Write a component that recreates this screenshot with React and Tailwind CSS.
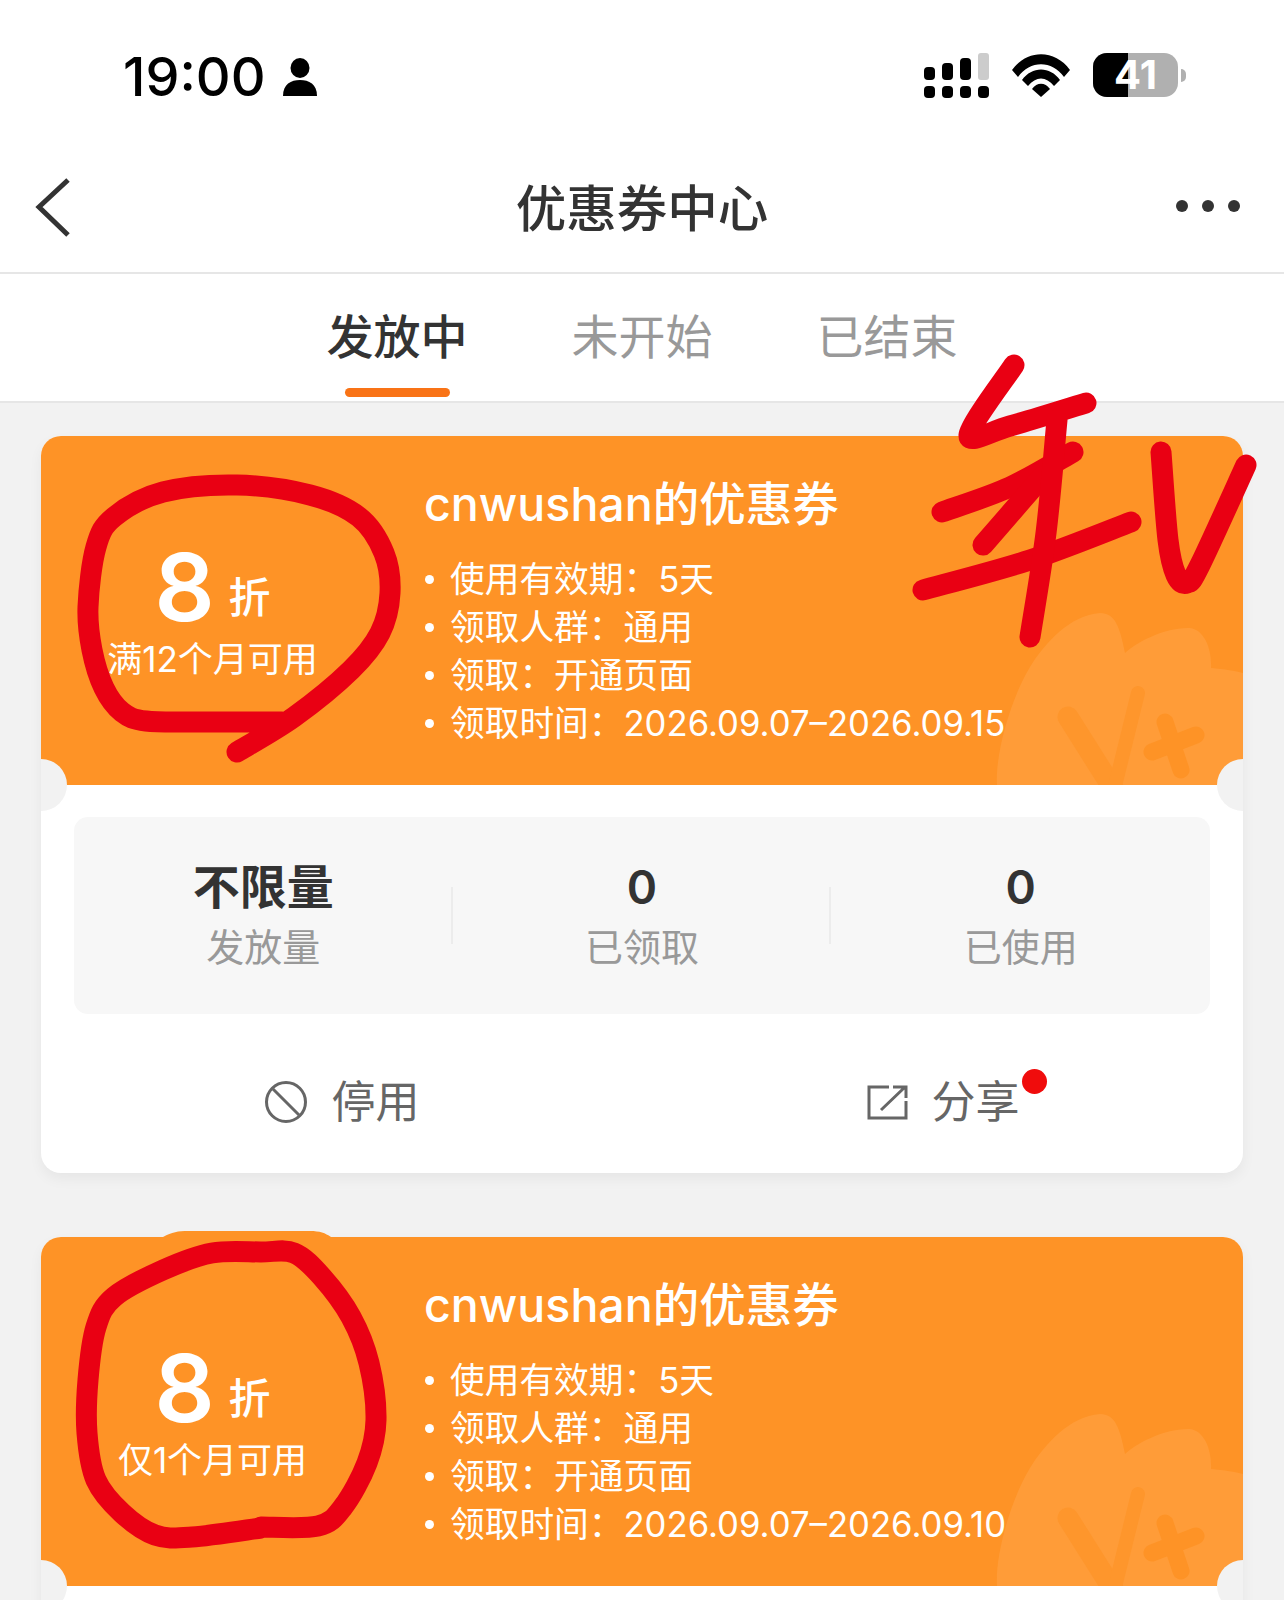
const smooth = (p) => {
  let d = `M${p[0][0]} ${p[0][1]}`;
  for (let i = 0; i < p.length - 1; i++) {
    const a = p[i - 1] || p[i], b = p[i], c = p[i + 1], e = p[i + 2] || c;
    d += `C${b[0] + (c[0] - a[0]) / 6} ${b[1] + (c[1] - a[1]) / 6} ${c[0] - (e[0] - b[0]) / 6} ${c[1] - (e[1] - b[1]) / 6} ${c[0]} ${c[1]}`;
  }
  return d;
};

const ink = [
  [[282,722],[200,722],[146,721],[122,712],[104,688],[92,650],[88,607],[96,547],[114,517],[163,492],[237,485],[310,495],[359,517],[384,553],[390,593],[380,633],[351,670],[294,717],[237,752]],
  [[261,1527],[318,1526],[343,1507],[367,1463],[376,1420],[369,1363],[351,1317],[322,1277],[294,1253],[261,1252],[212,1253],[163,1270],[114,1297],[96,1327],[88,1380],[87,1433],[96,1480],[122,1513],[155,1535],[192,1537],[261,1528]],
  [[1014,365],[969,435],[1010,426],[1086,403]],
  [[1073,452],[1010,487],[942,512]],
  [[1042,477],[983,545]],
  [[1131,522],[1030,560],[923,590]],
  [[1057,420],[1046,533],[1030,637]],
  [[1161,452],[1168,540],[1176,575],[1187,583],[1200,565],[1246,465]],
];

function Blob() {
  return (
    <svg className="absolute right-0 bottom-0" width="253" height="180" viewBox="0 0 253 180">
      <path fill="#ff9c38" d="M7 180C5 150 20 95 40 62C55 38 80 10 110 8C125 8 130 22 135 48C145 38 175 22 200 23C215 25 222 45 221 63C235 64 245 66 253 68V180Z" />
      <path fill="none" stroke="#fe962c" strokeWidth="21" strokeLinecap="round" d="M78 112L124 185" />
      <path fill="none" stroke="#fe962c" strokeWidth="14" strokeLinecap="round" d="M148 88L124 185" />
      <path fill="none" stroke="#fe9326" strokeWidth="17" strokeLinecap="round" d="M175 117L191 165M162 147L206 130" />
    </svg>
  );
}

function Line({ children }) {
  return (
    <div className="flex h-[48px] items-center">
      <span className="h-[9px] w-[9px] rounded-full bg-white ml-[1px] mr-[16px]" />
      <span className="text-[34.7px] leading-[48px] whitespace-nowrap font-normal">{children}</span>
    </div>
  );
}

function Stat({ value, label, big, divider }) {
  return (
    <div className="relative flex flex-col items-center">
      {divider ? <span className="absolute left-[-2px] top-[30px] h-[57px] w-[2px] bg-[#ececec]" /> : null}
      <div className={big ? "text-[47px] leading-[60px] font-bold text-[#333]" : "text-[46px] leading-[60px] font-semibold text-[#333]"}>{value}</div>
      <div className="text-[38px] leading-[60px] font-normal text-[#999]">{label}</div>
    </div>
  );
}

function Coupon({ sub, end, brief }) {
  return (
    <div className="relative mx-[41px] mb-[64px] h-[737px] shrink-0 overflow-hidden rounded-[20px] bg-white shadow-[0_6px_14px_rgba(0,0,0,0.05)]">
      <div className="relative flex h-[349px] bg-[#fe9326] text-white">
        <Blob />
        <div className="relative flex w-[343px] flex-col items-center pt-[104px]">
          <div className="flex h-[94px] items-baseline">
            <span className="text-[94px] leading-[94px] font-semibold">8</span>
            <span className="relative top-[-8px] ml-[14px] text-[42px] leading-[40px] font-medium">折</span>
          </div>
          <div className="mt-[5px] text-[35px] leading-[40px] whitespace-nowrap font-normal">{sub}</div>
        </div>
        <div className="relative pl-[40px] pt-[38px]">
          <div className="text-[46.5px] leading-[60px] font-medium mb-[21px] whitespace-nowrap">cnwushan的优惠券</div>
          <Line>使用有效期：5天</Line>
          <Line>领取人群：通用</Line>
          <Line>领取：开通页面</Line>
          <Line>领取时间：2026.09.07–{end}</Line>
        </div>
      </div>
      <span className="absolute left-[-26px] top-[323px] h-[52px] w-[52px] rounded-full bg-[#f2f2f2]" />
      <span className="absolute right-[-26px] top-[323px] h-[52px] w-[52px] rounded-full bg-[#f2f2f2]" />
      {brief ? null : (
        <>
          <div className="mx-[33px] mt-[32px] grid h-[197px] grid-cols-3 items-start rounded-[14px] bg-[#f7f7f7] pt-[40px]">
            <Stat big value="不限量" label="发放量" />
            <Stat divider value="0" label="已领取" />
            <Stat divider value="0" label="已使用" />
          </div>
          <div className="grid grid-cols-2 pt-[56px] text-[#666]">
            <div className="flex h-[64px] items-center justify-center gap-[24px]">
              <svg width="44" height="44" viewBox="0 0 44 44" fill="none" stroke="#666" strokeWidth="3"><circle cx="22" cy="22" r="19.5" /><path d="M9 9L35 35" /></svg>
              <span className="text-[44px] leading-[64px] font-normal">停用</span>
            </div>
            <div className="flex h-[64px] items-center justify-center gap-[24px]">
              <svg width="42" height="36" viewBox="0 0 42 36" fill="none" stroke="#666" strokeWidth="3"><path d="M23 3H3V34H40V17" /><path d="M15 26L38 4M27 3H40V14" /></svg>
              <span className="relative text-[44px] leading-[64px] font-normal">分享
                <span className="absolute left-[90px] top-[-1px] h-[25px] w-[25px] rounded-full bg-[#f00c0c]" />
              </span>
            </div>
          </div>
        </>
      )}
    </div>
  );
}

export default function App() {
  return (
    <div className="relative flex h-[1600px] w-[1284px] flex-col overflow-hidden bg-[#f2f2f2] font-['Inter','Noto_Sans_CJK_SC',sans-serif]">
      <div className="flex h-[150px] shrink-0 items-start justify-between bg-white pl-[123px] pr-[98px] pt-[46px]">
        <div className="flex items-center gap-[17px]">
          <span className="text-[54px] leading-[62px] font-medium text-black">19:00</span>
          <svg width="34" height="38" viewBox="0 0 34 38"><ellipse cx="17" cy="10" rx="9.5" ry="10" /><path d="M0 38C0 26 8 22 17 22S34 26 34 38Z" /></svg>
        </div>
        <div className="flex items-start gap-[23px] pt-[7px]">
          <svg width="65" height="46" viewBox="0 0 65 46">
            <rect x="0" y="14" width="11" height="13" rx="4" /><rect x="18" y="10" width="11" height="17" rx="4" /><rect x="36" y="5" width="11" height="22" rx="4" /><rect x="54" y="0" width="11" height="27" rx="3" fill="#ccc" />
            <rect x="0" y="33" width="11" height="12" rx="4" /><rect x="18" y="33" width="11" height="12" rx="4" /><rect x="36" y="33" width="11" height="12" rx="4" /><rect x="54" y="33" width="11" height="12" rx="4" />
          </svg>
          <svg width="58" height="44" viewBox="0 0 58 44">
            <path d="M0 17C15 -4 43 -4 58 17L52 24C40 7 18 7 6 24Z" />
            <path d="M10 27C20 13 38 13 48 27L42 33C34 23 24 23 16 33Z" />
            <path d="M20 36C25 29 33 29 38 36L29 44Z" />
          </svg>
          <div className="flex items-center">
            <div className="relative flex h-[44px] w-[85px] items-center justify-center rounded-[14px] bg-[#b0b0b0]">
              <span className="absolute left-0 top-0 h-full w-[35px] rounded-l-[14px] bg-black" />
              <span className="relative text-[40px] leading-[44px] font-bold text-white">41</span>
            </div>
            <span className="ml-[3px] h-[13px] w-[5px] rounded-r-full bg-[#b0b0b0]" />
          </div>
        </div>
      </div>

      <div className="relative flex h-[124px] shrink-0 items-center justify-center border-b-2 border-[#e6e6e6] bg-white">
        <svg className="absolute left-[35px] top-[27px]" width="36" height="60" viewBox="0 0 36 60" fill="none" stroke="#333" strokeWidth="5"><path d="M33 3L4 30L33 58" /></svg>
        <span className="text-[50.5px] leading-[60px] font-medium text-[#333] pb-[4px]">优惠券中心</span>
        <div className="absolute right-[44px] top-[50px] flex gap-[14px]">
          <span className="h-[12px] w-[12px] rounded-full bg-[#333]" />
          <span className="h-[12px] w-[12px] rounded-full bg-[#333]" />
          <span className="h-[12px] w-[12px] rounded-full bg-[#333]" />
        </div>
      </div>

      <div className="relative flex h-[129px] shrink-0 justify-center gap-[104px] border-b-2 border-[#e6e6e6] bg-white pt-[31px] text-[47px] leading-[64px]">
        <span className="relative font-medium text-[#333]">发放中
          <span className="absolute left-[18px] top-[83px] h-[9px] w-[105px] rounded-full bg-[#f97316]" />
        </span>
        <span className="font-normal text-[#999]">未开始</span>
        <span className="font-normal text-[#999]">已结束</span>
      </div>

      <div className="flex flex-col pt-[33px]">
        <Coupon sub="满12个月可用" end="2026.09.15" />
        <Coupon brief sub="仅1个月可用" end="2026.09.10" />
      </div>

      <svg className="absolute left-0 top-0" width="1284" height="1600" viewBox="0 0 1284 1600" fill="none" stroke="#e90013" strokeWidth="21" strokeLinecap="round" strokeLinejoin="round">
        <path d="M163 1237C172 1232 178 1231 188 1231H310C320 1231 325 1233 331 1237Z" fill="#fe9326" stroke="none" />
        {ink.map((p, i) => <path key={i} d={smooth(p)} />)}
      </svg>
    </div>
  );
}
